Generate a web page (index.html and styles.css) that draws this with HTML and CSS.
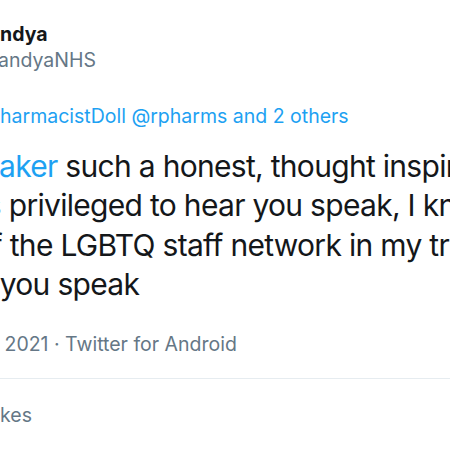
FILE: index.html
```html
<!DOCTYPE html>
<html lang="en">
<head>
    <meta charset="UTF-8">
    <meta name="viewport" content="width=device-width, initial-scale=1.0">
    <title>Tweet</title>
    <link rel="stylesheet" href="styles.css">
</head>
<body>
    <div class="tweet">
        <div class="author">
            <div class="name"><span class="cut">Aruna Pa</span>ndya</div>
            <div class="handle"><span class="cut">@ArunaP</span>andyaNHS</div>
        </div>
        <div class="reply"><span class="cut">Replying to @P</span>harmacistDoll @rpharms and 2 others</div>
        <div class="text">
            <div class="line line-1"><span class="cut link">@RebeccaB</span><span class="link">aker</span> such a honest, thought inspiring talk</div>
            <div class="line line-2"><span class="cut">I was</span> privileged to hear you speak, I know</div>
            <div class="line line-3"><span class="cut">members of</span> the LGBTQ staff network in my trust</div>
            <div class="line line-4"><span class="cut">were inspired to hear</span> you speak</div>
        </div>
        <div class="meta"><span class="cut">10:31 AM · Mar 4,</span> 2021 · Twitter for Android</div>
        <div class="stats">
            <div class="likes"><span class="cut">12 Li</span>kes</div>
        </div>
    </div>
</body>
</html>
```

FILE: styles.css
```css
body {
    margin: 0;
    padding: 0;
    background-color: #ffffff;
    font-family: Inter, "Liberation Sans", Arial, sans-serif;
    color: #14171a;
    overflow: hidden;
}
.tweet {
    padding-top: 21px;
    white-space: nowrap;
}
.cut {
    display: inline-block;
    width: 400px;
    margin-left: -400px;
    text-align: right;
}
.link {
    color: #1da1f2;
}
.name {
    font-size: 19.5px;
    line-height: 26px;
    font-weight: bold;
}
.handle {
    font-size: 19.5px;
    line-height: 26px;
    color: #657786;
    margin-left: -2px;
}
.reply {
    margin-top: 30px;
    font-size: 19.5px;
    line-height: 26px;
    color: #1da1f2;
}
.text {
    margin-top: 18px;
    font-size: 30px;
    line-height: 39.4px;
    letter-spacing: -0.7px;
}
.line-1 {
    margin-left: -1px;
}
.line-2 {
    margin-left: 1px;
}
.line-3 {
    margin-left: 2px;
}
.line-4 {
    margin-left: -8px;
}
.meta {
    margin-top: 26px;
    margin-left: -1px;
    font-size: 19.5px;
    line-height: 26px;
    color: #657786;
}
.stats {
    margin-top: 21px;
    border-top: 1px solid #e6ecf0;
    padding-top: 23px;
}
.likes {
    font-size: 19.5px;
    line-height: 26px;
    color: #657786;
}
```
